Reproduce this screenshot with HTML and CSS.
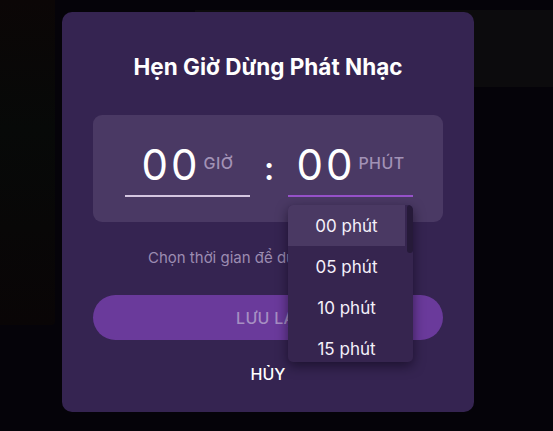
FILE: index.html
```html
<!DOCTYPE html>
<html lang="vi">
<head>
<meta charset="utf-8">
<title>Hẹn Giờ Dừng Phát Nhạc</title>
<link rel="stylesheet" href="styles.css">
</head>
<body>
<div class="page">
  <aside class="sidebar"></aside>
  <main class="main">
    <div class="topbar"></div>
  </main>
</div>

<div class="overlay">
  <div class="modal">
    <h2 class="title">Hẹn Giờ Dừng Phát Nhạc</h2>

    <div class="timebox">
      <div class="field">
        <span class="digits">00</span>
        <span class="unit">GIỜ</span>
      </div>
      <span class="colon">:</span>
      <div class="field field-active">
        <span class="digits">00</span>
        <span class="unit">PHÚT</span>
        <div class="dropdown">
          <ul class="options">
            <li class="option option-selected">00 phút</li>
            <li class="option">05 phút</li>
            <li class="option">10 phút</li>
            <li class="option">15 phút</li>
            <li class="option">20 phút</li>
            <li class="option">25 phút</li>
            <li class="option">30 phút</li>
            <li class="option">35 phút</li>
            <li class="option">40 phút</li>
            <li class="option">45 phút</li>
            <li class="option">50 phút</li>
            <li class="option">55 phút</li>
          </ul>
          <span class="scroll-thumb"></span>
        </div>
      </div>
    </div>

    <p class="hint">Chọn thời gian để dừng phát nhạc</p>

    <button class="btn-save" type="button">LƯU LẠI</button>
    <button class="btn-cancel" type="button">HỦY</button>
  </div>
</div>
</body>
</html>
```

FILE: styles.css
```css
* {
  box-sizing: border-box;
}

html, body {
  margin: 0;
  padding: 0;
  height: 100%;
}

body {
  background: #050309;
  font-family: Inter, "Noto Sans", "Liberation Sans", sans-serif;
  color: #ffffff;
  overflow: hidden;
}

.page {
  display: flex;
  height: 100%;
}

.sidebar {
  width: 55px;
  height: 325px;
  background: linear-gradient(180deg, #0b0606 0%, #070908 40%, #090506 100%);
  border-bottom-right-radius: 4px;
}

.main {
  flex: 1;
  padding: 10px 0 0 140px;
}

.topbar {
  height: 77px;
  background: #0c0b0d;
}

.overlay {
  position: fixed;
  inset: 0;
  display: flex;
  align-items: flex-start;
  padding: 12px 0 0 62px;
}

.modal {
  width: 412px;
  height: 400px;
  background: #352451;
  border-radius: 10px;
  padding: 40px 31px 26px;
  display: flex;
  flex-direction: column;
  align-items: stretch;
}

.title {
  margin: 0;
  font-size: 22.5px;
  line-height: 30px;
  font-weight: 700;
  text-align: center;
  color: #ffffff;
}

.timebox {
  margin-top: 33px;
  height: 107px;
  background: #4a3964;
  border-radius: 9px;
  padding: 26px 30px 0 32px;
  display: flex;
  justify-content: center;
  align-items: baseline;
}

.field {
  position: relative;
  width: 125px;
  height: 56px;
  padding-bottom: 6px;
  border-bottom: 2px solid #d4c6e0;
  display: flex;
  justify-content: center;
  align-items: flex-start;
}

.field-active {
  border-bottom-color: #9652c9;
}

.digits {
  font-size: 42px;
  line-height: 48px;
  font-weight: 400;
  letter-spacing: 3px;
  color: #ffffff;
}

.unit {
  margin-left: 3px;
  margin-top: 13px;
  font-size: 16px;
  line-height: 18px;
  font-weight: 500;
  letter-spacing: 0.4px;
  color: #a292b6;
}

.colon {
  width: 38px;
  text-align: center;
  font-size: 32px;
  line-height: 48px;
  font-weight: 600;
  color: #ffffff;
}

.dropdown {
  position: absolute;
  top: 64px;
  left: 0;
  width: 125px;
  height: 157px;
  background: #36254f;
  border-radius: 5px;
  box-shadow: 0 4px 12px rgba(10, 4, 20, 0.55);
  overflow: hidden;
  z-index: 5;
}

.options {
  margin: 0;
  padding: 0 8px 0 0;
  list-style: none;
}

.scroll-thumb {
  position: absolute;
  top: 0;
  right: 0;
  width: 6px;
  height: 48px;
  background: #261a39;
  border-radius: 3px;
}

.option {
  height: 41px;
  display: flex;
  align-items: center;
  justify-content: center;
  font-size: 17px;
  color: #f4f0fa;
}

.option-selected {
  background: #4a3963;
}

.hint {
  margin: 26px 0 0;
  font-size: 15px;
  line-height: 20px;
  text-align: center;
  color: #9c8cb1;
}

.btn-save {
  margin-top: 27px;
  height: 45px;
  border: none;
  border-radius: 23px;
  background: #6a3a9b;
  color: #a68fc3;
  font-family: inherit;
  font-size: 16px;
  font-weight: 500;
  letter-spacing: 0.3px;
}

.btn-cancel {
  margin-top: 22px;
  height: 24px;
  padding: 0;
  border: none;
  background: none;
  color: #ffffff;
  font-family: inherit;
  font-size: 16px;
  line-height: 24px;
  font-weight: 500;
  text-align: center;
}
```
